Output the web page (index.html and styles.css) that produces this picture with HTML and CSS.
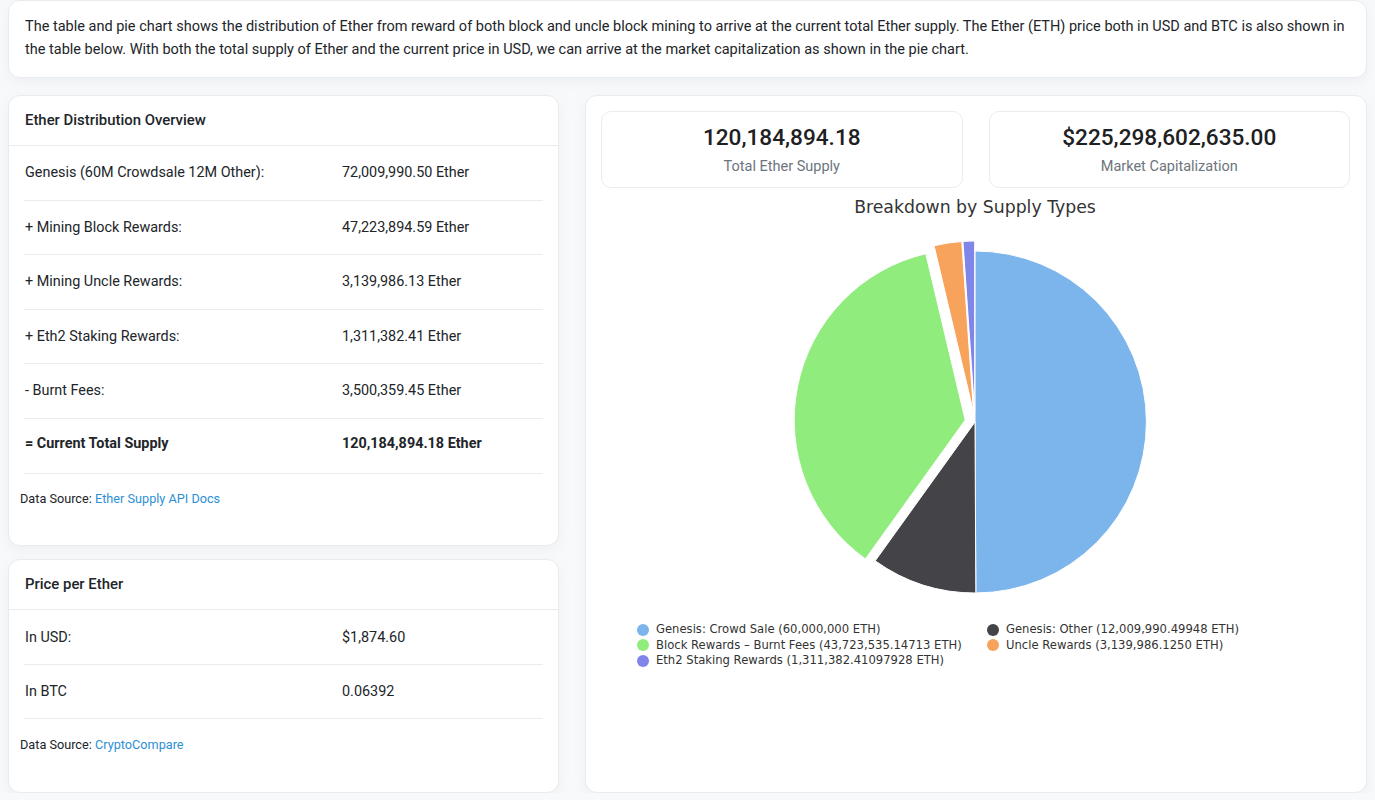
FILE: index.html
```html
<!DOCTYPE html>
<html lang="en">
<head>
<meta charset="utf-8">
<title>Ether Supply</title>
<link rel="stylesheet" href="styles.css">
</head>
<body>
<div class="page">
  <div class="card intro">
    The table and pie chart shows the distribution of Ether from reward of both block and uncle block mining to arrive at the current total Ether supply. The Ether (ETH) price both in USD and BTC is also shown in the table below. With both the total supply of Ether and the current price in USD, we can arrive at the market capitalization as shown in the pie chart.
  </div>

  <div class="main">
    <div class="left">
      <div class="card table-card dist">
        <div class="card-header">Ether Distribution Overview</div>
        <div class="card-body">
          <div class="row"><div class="label">Genesis (60M Crowdsale 12M Other):</div><div class="value">72,009,990.50 Ether</div></div>
          <div class="row"><div class="label">+ Mining Block Rewards:</div><div class="value">47,223,894.59 Ether</div></div>
          <div class="row"><div class="label">+ Mining Uncle Rewards:</div><div class="value">3,139,986.13 Ether</div></div>
          <div class="row"><div class="label">+ Eth2 Staking Rewards:</div><div class="value">1,311,382.41 Ether</div></div>
          <div class="row"><div class="label">- Burnt Fees:</div><div class="value">3,500,359.45 Ether</div></div>
          <div class="row total"><div class="label">= Current Total Supply</div><div class="value">120,184,894.18 Ether</div></div>
          <div class="source">Data Source: <a href="#">Ether Supply API Docs</a></div>
        </div>
      </div>

      <div class="card table-card price">
        <div class="card-header">Price per Ether</div>
        <div class="card-body">
          <div class="row"><div class="label">In USD:</div><div class="value">$1,874.60</div></div>
          <div class="row"><div class="label">In BTC</div><div class="value">0.06392</div></div>
          <div class="source">Data Source: <a href="#">CryptoCompare</a></div>
        </div>
      </div>
    </div>

    <div class="card right">
      <div class="stats">
        <div class="stat">
          <div class="stat-num">120,184,894.18</div>
          <div class="stat-label">Total Ether Supply</div>
        </div>
        <div class="stat">
          <div class="stat-num">$225,298,602,635.00</div>
          <div class="stat-label">Market Capitalization</div>
        </div>
      </div>
      <div class="chart">
        <div class="chart-title">Breakdown by Supply Types</div>
        <svg class="pie" width="748" height="390" viewBox="0 0 748 390">
          <g stroke="#ffffff" stroke-width="1" stroke-linejoin="round">
            <path fill="#7cb5ec" d="M374,203 L374,32 A171,171 0 0,1 374.83,374 Z"/>
            <path fill="#434348" d="M374,203 L374.83,374 A171,171 0 0,1 274.21,341.87 Z"/>
            <path fill="#90ed7d" transform="translate(-9.81,-1.94)" d="M374,203 L274.21,341.87 A171,171 0 0,1 334.56,36.61 Z"/>
            <path fill="#f7a35c" transform="translate(-1.5,-9.89)" d="M374,203 L334.56,36.61 A171,171 0 0,1 362.28,32.40 Z"/>
            <path fill="#8085e9" transform="translate(-0.34,-9.99)" d="M374,203 L362.28,32.40 A171,171 0 0,1 374,32 Z"/>
          </g>
        </svg>
        <div class="legend">
          <div class="legend-item"><span class="dot dot-blue"></span>Genesis: Crowd Sale (60,000,000 ETH)</div>
          <div class="legend-item"><span class="dot dot-dark"></span>Genesis: Other (12,009,990.49948 ETH)</div>
          <div class="legend-item"><span class="dot dot-green"></span>Block Rewards – Burnt Fees (43,723,535.14713 ETH)</div>
          <div class="legend-item"><span class="dot dot-orange"></span>Uncle Rewards (3,139,986.1250 ETH)</div>
          <div class="legend-item"><span class="dot dot-purple"></span>Eth2 Staking Rewards (1,311,382.41097928 ETH)</div>
        </div>
      </div>
    </div>
  </div>
</div>
</body>
</html>
```

FILE: styles.css
```css
* { box-sizing: border-box; }

html, body {
  margin: 0;
  padding: 0;
}

body {
  background: #f8f9fa;
  font-family: Roboto, "Liberation Sans", sans-serif;
  font-size: 14px;
  color: #212529;
}

.page {
  padding: 0 8px 0 8px;
  width: 1375px;
}

.card {
  background: #ffffff;
  border: 1px solid #e9ecef;
  border-radius: 12px;
  box-shadow: 0 4px 12px rgba(189, 197, 209, 0.18);
}

.intro {
  padding: 15px 16px 16px 16px;
  font-size: 14.5px;
  line-height: 22.5px;
  margin-bottom: 17px;
  width: 1359px;
}

.main {
  display: flex;
  gap: 26px;
  align-items: stretch;
}

.left {
  width: 551px;
  display: flex;
  flex-direction: column;
  gap: 13px;
}

.price {
  flex: 1;
}

.card-header {
  padding: 15px 16px 16px 16px;
  font-size: 14.9px;
  line-height: 18px;
  font-weight: 500;
  border-bottom: 1px solid #e9ecef;
}

.card-body {
  padding: 0 15px 0 15px;
}

.row {
  display: grid;
  grid-template-columns: 317px 1fr;
  padding: 16px 0 16px 1px;
  font-size: 14.4px;
  line-height: 21.6px;
  border-bottom: 1px solid #e9ecef;
}

.row.total {
  font-weight: 700;
  padding: 14px 0 18px 1px;
}

.source {
  font-size: 12.7px;
  padding: 16px 0 36px 0;
  margin-left: -4px;
  line-height: 18px;
}

.dist .source {
  padding-bottom: 37px;
}

.price .row:first-child {
  padding-top: 17px;
  padding-bottom: 15.5px;
}

.price .source {
  padding-top: 17px;
  padding-bottom: 38px;
}

.source a {
  color: #2d8fd5;
  text-decoration: none;
}

.right {
  flex: 1;
  width: 782px;
  padding: 15px 16px 20px 15px;
}

.stats {
  display: flex;
  gap: 26px;
}

.stat {
  flex: 1;
  border: 1px solid #e9ecef;
  border-radius: 10px;
  text-align: center;
  height: 77px;
  padding-top: 12px;
}

.stat-num {
  font-size: 22.6px;
  font-weight: 500;
  line-height: 28px;
  color: #1e2022;
}

.stat-label {
  color: #6c757d;
  font-size: 14.5px;
  line-height: 20px;
  margin-top: 4.5px;
}

.chart {
  background: #ffffff;
  width: 748px;
}

.chart-title {
  font-family: "DejaVu Sans", sans-serif;
  font-size: 17.3px;
  color: #333333;
  text-align: center;
  padding-top: 7px;
  line-height: 24px;
}

.pie {
  display: block;
}

.legend {
  margin-top: 13px;
  padding-left: 36px;
  display: flex;
  flex-wrap: wrap;
  font-family: "DejaVu Sans", sans-serif;
  font-size: 11.6px;
  color: #333333;
}

.legend-item {
  width: 350px;
  display: flex;
  align-items: center;
  line-height: 15.5px;
}

.dot {
  width: 12px;
  height: 12px;
  border-radius: 50%;
  margin-right: 7px;
  flex: none;
}

.dot-blue { background: #7cb5ec; }
.dot-dark { background: #434348; }
.dot-green { background: #90ed7d; }
.dot-orange { background: #f7a35c; }
.dot-purple { background: #8085e9; }
```
